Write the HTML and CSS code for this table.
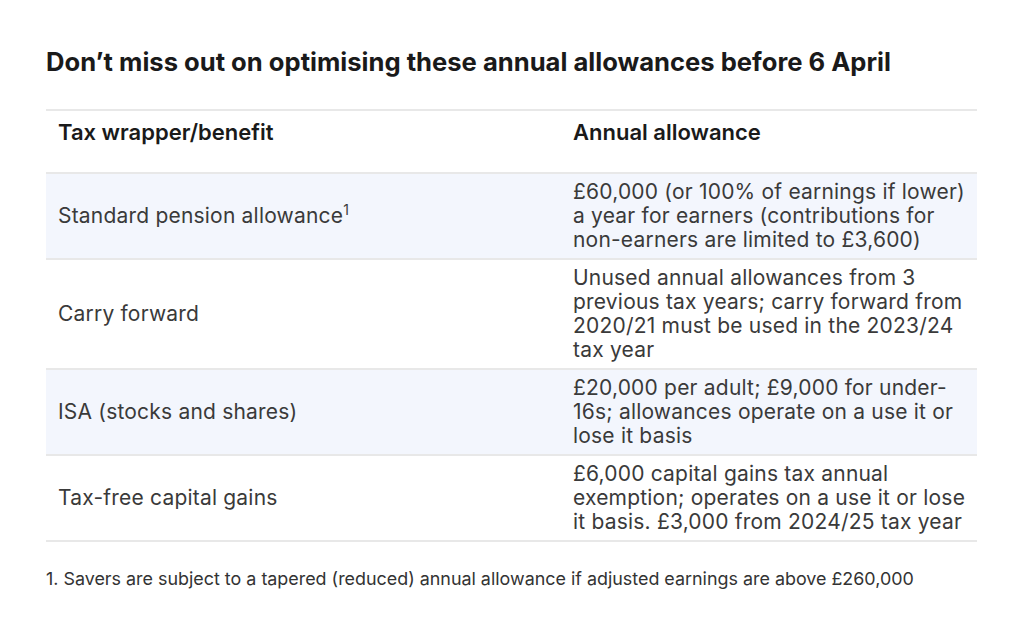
FILE: index.html
```html
<!DOCTYPE html>
<html lang="en">
<head>
<meta charset="utf-8">
<link rel="stylesheet" href="styles.css">
</head>
<body>
<main class="page">
  <h1 class="title">Don’t miss out on optimising these annual allowances before 6 April</h1>
  <table class="tbl">
    <thead>
      <tr><th class="c1">Tax wrapper/benefit</th><th class="c2">Annual allowance</th></tr>
    </thead>
    <tbody>
      <tr class="alt"><td>Standard pension allowance<sup>1</sup></td><td>£60,000 (or 100% of earnings if lower) a year for earners (contributions for non-earners are limited to £3,600)</td></tr>
      <tr><td>Carry forward</td><td>Unused annual allowances from 3 previous tax years; carry forward from 2020/21 must be used in the 2023/24 tax year</td></tr>
      <tr class="alt"><td>ISA (stocks and shares)</td><td>£20,000 per adult; £9,000 for under-16s; allowances operate on a use it or lose it basis</td></tr>
      <tr><td>Tax-free capital gains</td><td>£6,000 capital gains tax annual exemption; operates on a use it or lose it basis. £3,000 from 2024/25 tax year</td></tr>
    </tbody>
  </table>
  <p class="note">1. Savers are subject to a tapered (reduced) annual allowance if adjusted earnings are above £260,000</p>
</main>
</body>
</html>
```

FILE: styles.css
```css
html, body { margin: 0; padding: 0; background: #fff; }
body { font-family: Inter, "Noto Sans", sans-serif; color: #3a3a3a; }
.page { padding: 44px 47px 0 46px; width: 931px; }
.title { margin: 0 0 29px; font-size: 25.6px; font-weight: 700; color: #1a1a1a; line-height: 36px; }
.tbl { width: 931px; border-collapse: collapse; border-top: 2px solid #e8e8e8; }
.tbl th { text-align: left; font-weight: 600; font-size: 22px; color: #1a1a1a; padding: 8px 12px 27px; line-height: 26px; border-bottom: 2px solid #e8e8e8; }
.tbl .c1 { width: 491px; }
.tbl td { font-size: 21px; letter-spacing: 0.2px; line-height: 24px; padding: 6px 4px 6px 12px; vertical-align: middle; border-bottom: 2px solid #e8e8e8; }
.tbl tr.alt td { background: #f3f6fd; }
.tbl sup { font-size: 14px; line-height: 0; vertical-align: 8px; }
.note { margin: 25px 0 0; font-size: 17.9px; line-height: 24px; color: #333; }
```
